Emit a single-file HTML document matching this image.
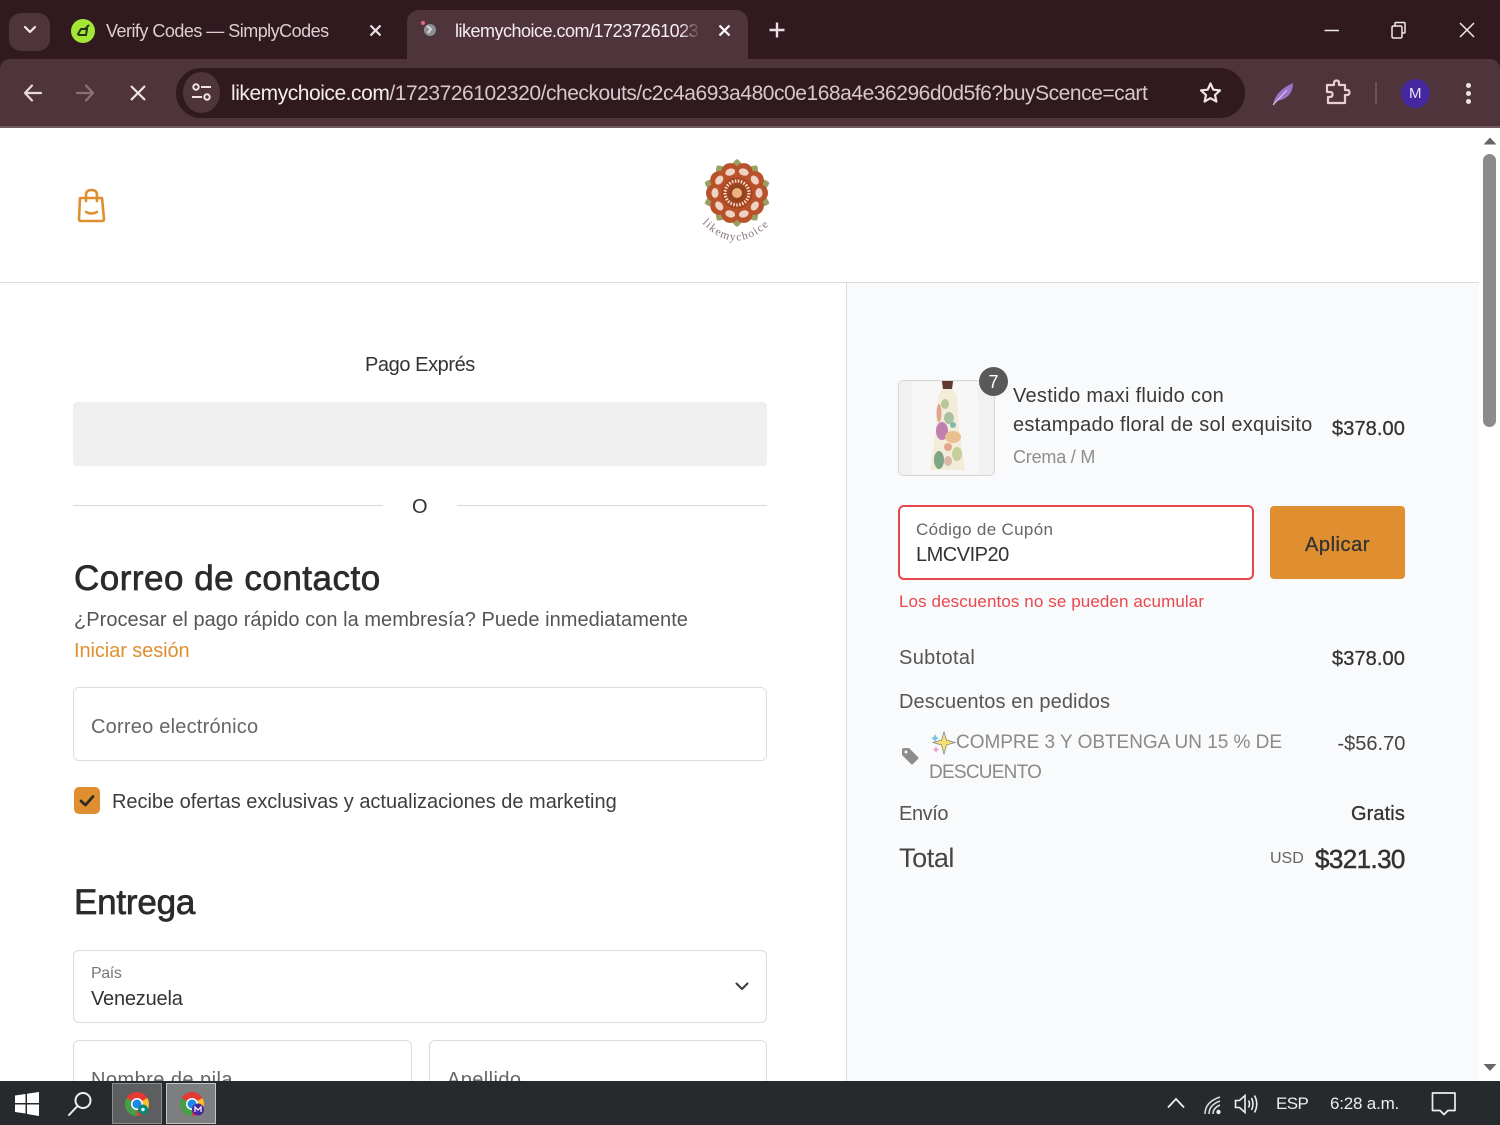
<!DOCTYPE html>
<html lang="es"><head><meta charset="utf-8"><title>Checkout</title>
<style>
html,body{margin:0;padding:0;width:1500px;height:1125px;overflow:hidden;background:#fff;font-family:"Liberation Sans",sans-serif}
.t{position:absolute;white-space:nowrap;line-height:1;color:#333}
.b{position:absolute;box-sizing:border-box}
svg{position:absolute;overflow:visible}
</style></head><body>
<!-- page -->
<div class="b" style="left:847px;top:283px;width:632px;height:800px;background:#f9fafb"></div>
<div class="b" style="left:0;top:282px;width:1479px;height:1px;background:#dcdcdc"></div>
<div class="b" style="left:846px;top:283px;width:1px;height:800px;background:#dcdcdc"></div>

<svg style="left:76px;top:187px" width="32" height="38" viewBox="0 0 32 38" fill="none" stroke="#e08f30" stroke-width="2.600" stroke-linecap="round" stroke-linejoin="round"><path d="M4 11H26L28 32Q28 34 26 34H5Q3 34 3 32Z"/><path d="M10 14V8Q10 3 15.500 3Q21 3 21 8V14"/><path d="M10 25Q15.500 28 21 25"/></svg>

<!-- logo -->
<svg style="left:700px;top:155px" width="74" height="92" viewBox="0 0 74 92">
<g transform="translate(37,38)">
<g fill="#9aa063"><path d="M-6,-25Q-5,-31 0,-34Q5,-31 6,-25Z"/><path d="M-6,-25Q-5,-31 0,-34Q5,-31 6,-25Z" transform="rotate(36)"/><path d="M-6,-25Q-5,-31 0,-34Q5,-31 6,-25Z" transform="rotate(72)"/><path d="M-6,-25Q-5,-31 0,-34Q5,-31 6,-25Z" transform="rotate(108)"/><path d="M-6,-25Q-5,-31 0,-34Q5,-31 6,-25Z" transform="rotate(144)"/><path d="M-6,-25Q-5,-31 0,-34Q5,-31 6,-25Z" transform="rotate(180)"/><path d="M-6,-25Q-5,-31 0,-34Q5,-31 6,-25Z" transform="rotate(216)"/><path d="M-6,-25Q-5,-31 0,-34Q5,-31 6,-25Z" transform="rotate(252)"/><path d="M-6,-25Q-5,-31 0,-34Q5,-31 6,-25Z" transform="rotate(288)"/><path d="M-6,-25Q-5,-31 0,-34Q5,-31 6,-25Z" transform="rotate(324)"/></g>
<g fill="#b9512b" transform="rotate(18)"><circle cy="-22" r="9"/><circle cy="-22" r="9" transform="rotate(36)"/><circle cy="-22" r="9" transform="rotate(72)"/><circle cy="-22" r="9" transform="rotate(108)"/><circle cy="-22" r="9" transform="rotate(144)"/><circle cy="-22" r="9" transform="rotate(180)"/><circle cy="-22" r="9" transform="rotate(216)"/><circle cy="-22" r="9" transform="rotate(252)"/><circle cy="-22" r="9" transform="rotate(288)"/><circle cy="-22" r="9" transform="rotate(324)"/></g>
<g fill="#eed3c4" transform="rotate(18)"><ellipse cy="-22" rx="5" ry="3.500"/><ellipse cy="-22" rx="5" ry="3.500" transform="rotate(36)"/><ellipse cy="-22" rx="5" ry="3.500" transform="rotate(72)"/><ellipse cy="-22" rx="5" ry="3.500" transform="rotate(108)"/><ellipse cy="-22" rx="5" ry="3.500" transform="rotate(144)"/><ellipse cy="-22" rx="5" ry="3.500" transform="rotate(180)"/><ellipse cy="-22" rx="5" ry="3.500" transform="rotate(216)"/><ellipse cy="-22" rx="5" ry="3.500" transform="rotate(252)"/><ellipse cy="-22" rx="5" ry="3.500" transform="rotate(288)"/><ellipse cy="-22" rx="5" ry="3.500" transform="rotate(324)"/></g>
<circle r="15.500" fill="#a8431f"/><circle r="12" fill="none" stroke="#f0e2d0" stroke-width="3.200" stroke-dasharray="1.500 1.500"/><circle r="8.500" fill="#93441f"/><circle r="5" fill="#eeb27e"/>
</g>
<defs><path id="arc" d="M2,68Q37,104 73,66"/></defs>
<text font-family="Liberation Serif,serif" font-size="11.500" fill="#8a6f78" letter-spacing="1.300"><textPath href="#arc">likemychoice</textPath></text>
</svg>

<div class="t" style="left:365px;top:355px;font-size:20px;letter-spacing:-.42px">Pago Exprés</div>
<div class="b" style="left:73px;top:402px;width:694px;height:64px;background:#efefef;border-radius:4px"></div>
<div class="b" style="left:73px;top:505px;width:310px;height:1px;background:#d9d9d9"></div>
<div class="b" style="left:457px;top:505px;width:310px;height:1px;background:#d9d9d9"></div>
<div class="t" style="left:412px;top:497px;font-size:20px">O</div>

<div class="t" style="left:74px;top:561px;font-size:35px;color:#2b2b2b;letter-spacing:.5px;-webkit-text-stroke:.7px #2b2b2b">Correo de contacto</div>
<div class="t" style="left:74px;top:610px;font-size:20px;color:#555;letter-spacing:.04px">¿Procesar el pago rápido con la membresía? Puede inmediatamente</div>
<div class="t" style="left:74px;top:641px;font-size:20px;color:#e08f30;letter-spacing:-.08px">Iniciar sesión</div>

<div class="b" style="left:73px;top:687px;width:694px;height:74px;background:#fff;border:1.500px solid #d9dde2;border-radius:6px"></div>
<div class="t" style="left:91px;top:717px;font-size:20px;color:#666;letter-spacing:.22px">Correo electrónico</div>

<div class="b" style="left:74px;top:787px;width:26px;height:27px;background:#e08f30;border-radius:5px"></div>
<svg style="left:74px;top:787px" width="26" height="27" fill="none" stroke="#2d2a26" stroke-width="2.800" stroke-linecap="round" stroke-linejoin="round"><path d="M7 14L11.500 18L19 9.500"/></svg>
<div class="t" style="left:112px;top:792px;font-size:20px;color:#3d3d3d;letter-spacing:-.02px">Recibe ofertas exclusivas y actualizaciones de marketing</div>

<div class="t" style="left:74px;top:885px;font-size:35px;color:#2b2b2b;letter-spacing:-.2px;-webkit-text-stroke:.7px #2b2b2b">Entrega</div>

<div class="b" style="left:73px;top:950px;width:694px;height:73px;background:#fff;border:1.500px solid #d9dde2;border-radius:6px"></div>
<div class="t" style="left:91px;top:966px;font-size:16px;color:#777;letter-spacing:-.4px">País</div>
<div class="t" style="left:91px;top:989px;font-size:20px;color:#333;letter-spacing:-.2px">Venezuela</div>
<svg style="left:734px;top:981px" width="16" height="12" fill="none" stroke="#444" stroke-width="2.200" stroke-linecap="round" stroke-linejoin="round"><path d="M2.500 2.500L8 8L13.500 2.500"/></svg>

<div class="b" style="left:73px;top:1040px;width:339px;height:60px;background:#fff;border:1.500px solid #d9dde2;border-radius:6px"></div>
<div class="t" style="left:91px;top:1070px;font-size:20px;color:#666;letter-spacing:.45px">Nombre de pila</div>
<div class="b" style="left:429px;top:1040px;width:338px;height:60px;background:#fff;border:1.500px solid #d9dde2;border-radius:6px"></div>
<div class="t" style="left:447px;top:1070px;font-size:20px;color:#666;letter-spacing:.4px">Apellido</div>

<!-- summary -->
<div class="b" style="left:898px;top:380px;width:97px;height:96px;background:#f1f1f1;border:1.500px solid #d8d8d8;border-radius:5px"></div>
<div class="b" style="left:912px;top:382px;width:66px;height:92px;background:#f7f7f7"></div>
<svg style="left:925px;top:380px" width="46" height="96" viewBox="0 0 46 96">
<path d="M16 1H29L28 10L32 16L34 50L40 90H5L11 50L13 16L17 10Z" fill="#f3ecd9"/><path d="M17 1H28L27 9H18Z" fill="#5e3a33"/>
<ellipse cx="17" cy="51" rx="6" ry="9" fill="#c07fb0"/><ellipse cx="28" cy="57" rx="8" ry="6" fill="#e9c090"/><ellipse cx="20" cy="24" rx="4" ry="5" fill="#b7c79a"/><ellipse cx="24" cy="38" rx="5" ry="6" fill="#a9c1a2"/><ellipse cx="14" cy="33" rx="2.500" ry="9" fill="#e3a58e"/><ellipse cx="32" cy="74" rx="5" ry="7" fill="#c5cf9a"/><ellipse cx="14" cy="80" rx="5" ry="9" fill="#7fa684"/><ellipse cx="23" cy="67" rx="4" ry="4" fill="#e3a58e"/><ellipse cx="23" cy="81" rx="4" ry="5" fill="#d9b7a8"/><ellipse cx="28" cy="45" rx="3" ry="3" fill="#7fbcb0"/>
</svg>
<div class="b" style="left:979px;top:367px;width:29px;height:29px;background:#595959;border-radius:50%"></div>
<div class="t" style="left:988.500px;top:373px;font-size:18px;color:#fff">7</div>

<div class="t" style="left:1013px;top:386px;font-size:20px;color:#3a3a3a;letter-spacing:.28px">Vestido maxi fluido con</div>
<div class="t" style="left:1013px;top:415px;font-size:20px;color:#3a3a3a;letter-spacing:.25px">estampado floral de sol exquisito</div>
<div class="t" style="left:1013px;top:448px;font-size:18px;color:#8d8d8d;letter-spacing:-.2px">Crema / M</div>
<div class="t" style="left:1332px;top:419px;font-size:20px;color:#333;letter-spacing:.1px;-webkit-text-stroke:.3px #333">$378.00</div>

<div class="b" style="left:898px;top:505px;width:356px;height:75px;background:#fff;border:2.500px solid #e8474c;border-radius:6px"></div>
<div class="t" style="left:916px;top:521px;font-size:17px;color:#666;letter-spacing:.33px">Código de Cupón</div>
<div class="t" style="left:916px;top:545px;font-size:20px;color:#333;letter-spacing:-.5px">LMCVIP20</div>
<div class="b" style="left:1270px;top:506px;width:135px;height:73px;background:#e08f30;border-radius:4px"></div>
<div class="t" style="left:1305px;top:535px;font-size:20px;color:#333;letter-spacing:.55px;-webkit-text-stroke:.3px #333">Aplicar</div>
<div class="t" style="left:899px;top:593px;font-size:17px;color:#e8474c;letter-spacing:.1px">Los descuentos no se pueden acumular</div>

<div class="t" style="left:899px;top:648px;font-size:20px;color:#555;letter-spacing:.35px">Subtotal</div>
<div class="t" style="left:1332px;top:649px;font-size:20px;color:#333;letter-spacing:.1px;-webkit-text-stroke:.3px #333">$378.00</div>
<div class="t" style="left:899px;top:692px;font-size:20px;color:#555;letter-spacing:.1px">Descuentos en pedidos</div>

<svg style="left:901px;top:747px" width="18" height="18" viewBox="0 0 18 18"><path d="M1 3Q1 1 3 1H8L17 10Q18 11 17 12L12 17Q11 18 10 17L1 8Z" fill="#8d8d8d"/><circle cx="5" cy="5" r="1.500" fill="#f9fafb"/></svg>
<svg style="left:930px;top:731px" width="26" height="24" viewBox="0 0 26 24"><path d="M14 1L16.500 9L25 11.500L16.500 14L14 23L11.500 14L3 11.500L11.500 9Z" fill="#f7df72" stroke="#888" stroke-width=".8"/><path d="M5 3L6.500 6L9 7L6.500 8.500L5 11L3.500 8.500L1 7L3.500 6Z" fill="#7fc4dc"/><path d="M6 15L7.200 17.500L9.500 18.500L7.200 19.500L6 22L4.800 19.500L2.500 18.500L4.800 17.500Z" fill="#eaa3cf"/></svg>
<div class="t" style="left:956px;top:733px;font-size:19px;color:#8a8a8a;letter-spacing:-.02px">COMPRE 3 Y OBTENGA UN 15 % DE</div>
<div class="t" style="left:929px;top:763px;font-size:19px;color:#8a8a8a;letter-spacing:-.75px">DESCUENTO</div>
<div class="t" style="left:1337.500px;top:734px;font-size:20px;color:#444">-$56.70</div>

<div class="t" style="left:899px;top:804px;font-size:20px;color:#555;letter-spacing:-.4px">Envío</div>
<div class="t" style="left:1351px;top:804px;font-size:20px;color:#333;letter-spacing:.1px;-webkit-text-stroke:.3px #333">Gratis</div>
<div class="t" style="left:899px;top:845px;font-size:27px;color:#444;letter-spacing:-.4px">Total</div>
<div class="t" style="left:1270px;top:851px;font-size:16px;color:#666">USD</div>
<div class="t" style="left:1315px;top:846px;font-size:26px;color:#333;letter-spacing:-.6px;-webkit-text-stroke:.5px #333">$321.30</div>

<!-- scrollbar -->
<div class="b" style="left:1479px;top:128px;width:21px;height:954px;background:#fff"></div>
<svg style="left:1482px;top:136px" width="16" height="9"><path d="M1.500 8.500L8 1.500L14.500 8.500Z" fill="#666"/></svg>
<svg style="left:1482px;top:1063px" width="16" height="9"><path d="M1.500 1L8 8L14.500 1Z" fill="#666"/></svg>
<div class="b" style="left:1483px;top:154px;width:13px;height:273px;background:#8b8b8b;border-radius:7px"></div>

<!-- chrome -->
<div class="b" style="left:0;top:0;width:1500px;height:128px;background:#301a1f"></div>
<div class="b" style="left:0;top:59px;width:1500px;height:69px;background:#50343b;border-radius:10px 10px 0 0"></div>
<div class="b" style="left:0;top:126px;width:1500px;height:2px;background:#6f5a5f"></div>
<div class="b" style="left:9px;top:13px;width:41px;height:38px;background:#50343b;border-radius:12px"></div>
<svg style="left:22px;top:24px" width="16" height="12" fill="none" stroke="#f3e8ea" stroke-width="2.200" stroke-linecap="round" stroke-linejoin="round"><path d="M3 3L8 8L13 3"/></svg>
<div class="b" style="left:71px;top:19px;width:24px;height:24px;background:#a3e635;border-radius:50%"></div>
<svg style="left:71px;top:19px" width="24" height="24" fill="none" stroke="#26331a" stroke-width="2"><path d="M7 15L10 10H16L15 16H8Z M14 10L18 6"/></svg>
<div class="t" style="left:106px;top:22px;font-size:18px;color:#dccfd2;letter-spacing:-.52px">Verify Codes — SimplyCodes</div>
<svg style="left:369px;top:24px" width="13" height="13" fill="none" stroke="#eadfe2" stroke-width="2.200"><path d="M1.500 1.500L11.500 11.500M11.500 1.500L1.500 11.500"/></svg>
<div class="b" style="left:407px;top:10px;width:341px;height:60px;background:#50343b;border-radius:12px 12px 0 0"></div>
<svg style="left:420px;top:20px" width="20" height="20"><circle cx="10" cy="10" r="6" fill="#8c8f96"/><path d="M7 6L11 9L8 13" stroke="#d8d8d8" stroke-width="2" fill="none"/><circle cx="3" cy="3" r="2" fill="#e66a80"/></svg>
<div class="t" style="left:455px;top:22px;font-size:18px;color:#f5eef0;letter-spacing:-.5px;width:245px;overflow:hidden;-webkit-mask-image:linear-gradient(90deg,#000 92%,transparent)">likemychoice.com/1723726102320</div>
<svg style="left:718px;top:24px" width="13" height="13" fill="none" stroke="#fff" stroke-width="2.200"><path d="M1.500 1.500L11.500 11.500M11.500 1.500L1.500 11.500"/></svg>
<svg style="left:768px;top:21px" width="18" height="18" fill="none" stroke="#eadfe2" stroke-width="2.400"><path d="M9 1.500V16.500M1.500 9H16.500"/></svg>
<svg style="left:1323px;top:24px" width="18" height="12" fill="none" stroke="#f3e8ea" stroke-width="1.500"><path d="M1.500 6.500H16"/></svg>
<svg style="left:1390px;top:21px" width="18" height="18" fill="none" stroke="#f3e8ea" stroke-width="1.500"><rect x="2" y="5" width="10" height="12" rx="1.500"/><path d="M5 5V2.500Q5 1.500 6 1.500H14Q15 1.500 15 2.500V11Q15 12 14 12H12"/></svg>
<svg style="left:1458px;top:21px" width="18" height="18" fill="none" stroke="#f3e8ea" stroke-width="1.500"><path d="M2 2L16 16M16 2L2 16"/></svg>

<svg style="left:22px;top:82px" width="22" height="22" fill="none" stroke="#e8d9dc" stroke-width="2.200" stroke-linecap="round" stroke-linejoin="round"><path d="M19 11H3M10 3.500L3 11L10 18.500"/></svg>
<svg style="left:74px;top:82px" width="22" height="22" fill="none" stroke="#8c7278" stroke-width="2.200" stroke-linecap="round" stroke-linejoin="round"><path d="M3 11H19M12 3.500L19 11L12 18.500"/></svg>
<svg style="left:129px;top:84px" width="18" height="18" fill="none" stroke="#efe4e6" stroke-width="2.200"><path d="M2 2L16 16M16 2L2 16"/></svg>
<div class="b" style="left:176px;top:68px;width:1069px;height:50px;background:#301a1f;border-radius:25px"></div>
<div class="b" style="left:183px;top:72px;width:37px;height:41px;background:#50343b;border-radius:50%"></div>
<svg style="left:191px;top:82px" width="21" height="21" fill="none" stroke="#efe4e6" stroke-width="2"><circle cx="5" cy="5" r="2.700"/><path d="M10 5H20M1 15H11"/><circle cx="16" cy="15" r="2.700"/></svg>
<div class="t" style="left:231px;top:83px;font-size:21px;color:#f4eced;letter-spacing:-.46px"><span>likemychoice.com</span><span style="color:#d6c8cb">/1723726102320/checkouts/c2c4a693a480c0e168a4e36296d0d5f6?buyScence=cart</span></div>
<svg style="left:1199px;top:81px" width="23" height="23" fill="none" stroke="#efe4e6" stroke-width="2.200" stroke-linejoin="round"><path d="M11.500 2.500L14.300 8.700L21 9.400L16 14L17.400 20.600L11.500 17.200L5.600 20.600L7 14L2 9.400L8.700 8.700Z"/></svg>
<svg style="left:1271px;top:80px" width="26" height="27" viewBox="0 0 26 27"><path d="M2 25Q4 11 22 3Q22 18 6 21Z" fill="#9e72c9"/><path d="M2 25L16 10" stroke="#d8c4ea" stroke-width="1.200"/></svg>
<svg style="left:1325px;top:79px" width="26" height="27" fill="none" stroke="#e8cfd3" stroke-width="2.200" stroke-linejoin="round"><path d="M2 6H9V4Q9 1.500 11.500 1.500Q14 1.500 14 4V6H20V11H22Q24.500 11 24.500 13.500Q24.500 16 22 16H20V24H3V18H5Q7.500 18 7.500 15.500Q7.500 13 5 13H2Z"/></svg>
<div class="b" style="left:1375px;top:82px;width:1.500px;height:22px;background:#6f5259"></div>
<div class="b" style="left:1401px;top:79px;width:29px;height:29px;background:#4527a0;border-radius:50%"></div>
<div class="t" style="left:1409px;top:86px;font-size:15px;color:#e9e4f5">M</div>
<div class="b" style="left:1466px;top:83px;width:5px;height:5px;background:#efe4e6;border-radius:50%"></div>
<div class="b" style="left:1466px;top:91px;width:5px;height:5px;background:#efe4e6;border-radius:50%"></div>
<div class="b" style="left:1466px;top:99px;width:5px;height:5px;background:#efe4e6;border-radius:50%"></div>

<!-- taskbar -->
<div class="b" style="left:0;top:1081px;width:1500px;height:44px;background:#272a2c"></div>
<svg style="left:15px;top:1092px" width="24" height="24"><path d="M0 3.500L10.500 2V11H0ZM12 1.800L24 0V11H12ZM0 12.500H10.500V21.500L0 20ZM12 12.500H24V24L12 22Z" fill="#fff"/></svg>
<svg style="left:67px;top:1091px" width="26" height="26" fill="none" stroke="#eee" stroke-width="2"><circle cx="16" cy="9.500" r="7.500"/><path d="M10.500 15L2 24" stroke-linecap="round"/></svg>
<div class="b" style="left:112px;top:1083px;width:50px;height:41px;background:#5c5e5f;border:1.500px solid #8b8d8e"></div>
<div class="b" style="left:166px;top:1083px;width:50px;height:41px;background:#7c7e7f;border:1.500px solid #c3c5c6"></div>
<svg style="left:125px;top:1092px" width="26" height="26" viewBox="0 0 26 26"><circle cx="12" cy="12" r="12" fill="#e53935"/><path d="M12 12L1.600 18A12 12 0 0 0 12 24Z" fill="#43a047"/><path d="M12 12L1.600 18A12 12 0 0 1 1.600 6Z" fill="#43a047"/><path d="M12 12L22.400 6A12 12 0 0 1 18 22.400Z" fill="#fbc02d"/><circle cx="12" cy="12" r="6" fill="#fff"/><circle cx="12" cy="12" r="4.500" fill="#1e88e5"/><circle cx="18" cy="17.500" r="5" fill="#00897b"/><circle cx="18" cy="17.500" r="1.800" fill="#e0f2f1"/></svg>
<svg style="left:180px;top:1092px" width="26" height="26" viewBox="0 0 26 26"><circle cx="12" cy="12" r="12" fill="#e53935"/><path d="M12 12L1.600 18A12 12 0 0 0 12 24Z" fill="#43a047"/><path d="M12 12L1.600 18A12 12 0 0 1 1.600 6Z" fill="#43a047"/><path d="M12 12L22.400 6A12 12 0 0 1 18 22.400Z" fill="#fbc02d"/><circle cx="12" cy="12" r="6" fill="#fff"/><circle cx="12" cy="12" r="4.500" fill="#1e88e5"/><circle cx="18" cy="17.500" r="6" fill="#4527a0"/><path d="M15 20V15L18 18L21 15V20" stroke="#fff" stroke-width="1.200" fill="none"/></svg>
<svg style="left:1167px;top:1097px" width="18" height="12" fill="none" stroke="#eee" stroke-width="1.800"><path d="M1 10.500L9 2L17 10.500"/></svg>
<svg style="left:1203px;top:1094px" width="22" height="22" fill="none" stroke="#ddd" stroke-width="1.500"><path d="M2 20Q2 8 17 3M6 20Q6 11 17 7M10 20Q10 14 17 11"/><circle cx="15.500" cy="18" r="2.200" fill="#eee" stroke="none"/></svg>
<svg style="left:1234px;top:1092px" width="26" height="24" fill="none" stroke="#eee" stroke-width="1.600"><path d="M1.500 8.500H5.500L11 3.500V20.500L5.500 15.500H1.500Z"/><path d="M14.500 8.500Q16.500 12 14.500 15.500M17.500 6Q20.500 12 17.500 18M20.500 3.500Q25 12 20.500 20.500"/></svg>
<div class="t" style="left:1276px;top:1095px;font-size:17px;color:#eee;letter-spacing:-.6px">ESP</div>
<div class="t" style="left:1330px;top:1095px;font-size:17px;color:#eee;letter-spacing:-.2px">6:28 a.m.</div>
<svg style="left:1431px;top:1091px" width="26" height="26" fill="none" stroke="#eee" stroke-width="1.700" stroke-linejoin="round"><path d="M1.500 2H24V19.500H17L13 23.500L9 19.500H1.500Z"/></svg>
</body></html>
